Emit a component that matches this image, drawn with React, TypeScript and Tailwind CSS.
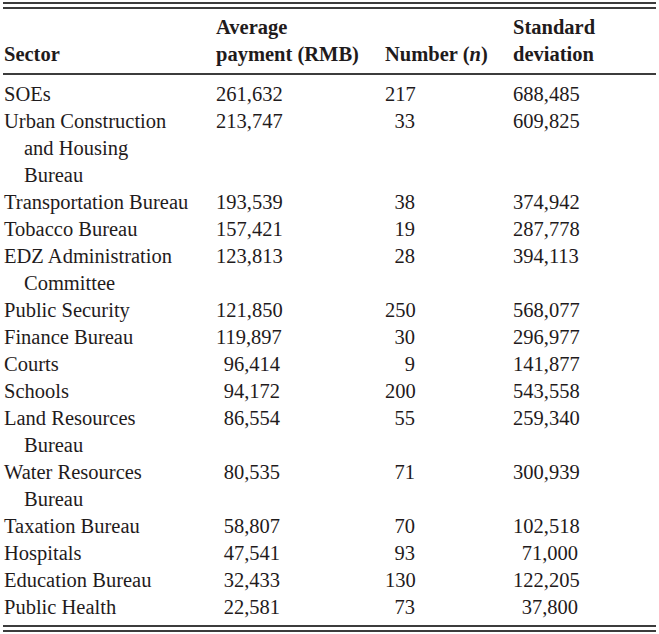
import React from 'react';

type Row = { sector: string[]; avg: string; n: string; sd: string };

const ROWS: Row[] = [
  { sector: ['SOEs'], avg: '261,632', n: '217', sd: '688,485' },
  { sector: ['Urban Construction', 'and Housing', 'Bureau'], avg: '213,747', n: '33', sd: '609,825' },
  { sector: ['Transportation Bureau'], avg: '193,539', n: '38', sd: '374,942' },
  { sector: ['Tobacco Bureau'], avg: '157,421', n: '19', sd: '287,778' },
  { sector: ['EDZ Administration', 'Committee'], avg: '123,813', n: '28', sd: '394,113' },
  { sector: ['Public Security'], avg: '121,850', n: '250', sd: '568,077' },
  { sector: ['Finance Bureau'], avg: '119,897', n: '30', sd: '296,977' },
  { sector: ['Courts'], avg: '96,414', n: '9', sd: '141,877' },
  { sector: ['Schools'], avg: '94,172', n: '200', sd: '543,558' },
  { sector: ['Land Resources', 'Bureau'], avg: '86,554', n: '55', sd: '259,340' },
  { sector: ['Water Resources', 'Bureau'], avg: '80,535', n: '71', sd: '300,939' },
  { sector: ['Taxation Bureau'], avg: '58,807', n: '70', sd: '102,518' },
  { sector: ['Hospitals'], avg: '47,541', n: '93', sd: '71,000' },
  { sector: ['Education Bureau'], avg: '32,433', n: '130', sd: '122,205' },
  { sector: ['Public Health'], avg: '22,581', n: '73', sd: '37,800' },
];

const Rule = ({ className = '' }: { className?: string }) => (
  <div className={`h-[2px] bg-[#3c3c3c] ${className}`} />
);

const App: React.FC = () => {
  return (
    <div
      className="w-[659px] h-[634px] bg-white text-[#1f1b1c] text-[20.5px] leading-[27px] px-[3px] pt-[2px]"
      style={{ fontFamily: '"Liberation Serif", "Times New Roman", serif' }}
    >
      <Rule />
      <Rule className="mt-[3px]" />

      <div className="grid grid-cols-[213px_169px_128px_1fr] font-bold pt-[4.6px] pb-[5px] items-end">
        <div className="pl-[1px]">Sector</div>
        <div>
          Average
          <br />
          payment (RMB)
        </div>
        <div>
          Number (<i>n</i>)
        </div>
        <div>
          Standard
          <br />
          deviation
        </div>
      </div>

      <Rule />

      <div className="pt-[6px] pb-[4.4px]">
        {ROWS.map(row => (
          <div key={row.sector.join(' ')} className="grid grid-cols-[213px_169px_128px_1fr]">
            <div className="pl-[1px]">
              {row.sector.map((line, i) => (
                <div key={line} className={i > 0 ? 'pl-[20px]' : ''}>
                  {line}
                </div>
              ))}
            </div>
            <div>
              <span className="inline-block w-[64px] text-right">{row.avg}</span>
            </div>
            <div>
              <span className="inline-block w-[30px] text-right">{row.n}</span>
            </div>
            <div>
              <span className="inline-block w-[65px] text-right">{row.sd}</span>
            </div>
          </div>
        ))}
      </div>

      <Rule />
      <Rule className="mt-[3px]" />
    </div>
  );
};

export default App;
